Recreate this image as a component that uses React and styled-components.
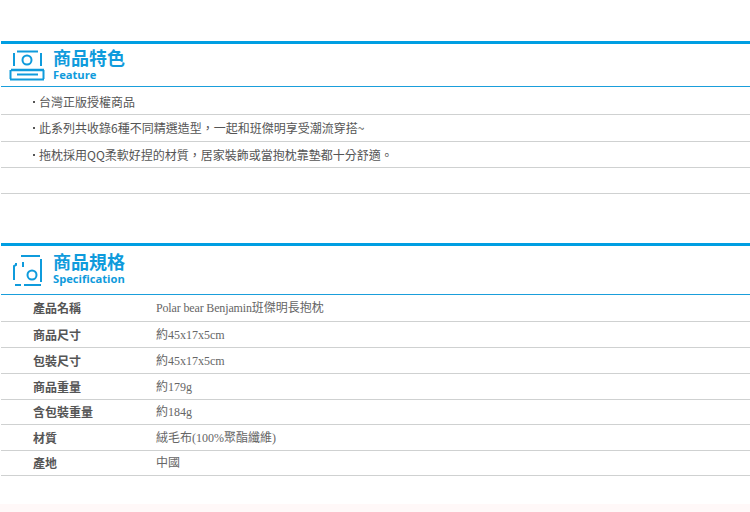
import styled, { createGlobalStyle } from 'styled-components';

const GlobalStyle = createGlobalStyle`
  html, body {
    margin: 0;
    padding: 0;
    background: #fff;
  }
  body {
    font-family: "Liberation Serif", "Noto Sans CJK TC", serif;
  }
`;

const Page = styled.div`
  width: 750px;
  height: 512px;
  overflow: hidden;
  display: flex;
  flex-direction: column;
  padding: 41px 0 0 1px;
  box-sizing: border-box;
`;

const Section = styled.section`
  margin-bottom: ${(p) => p.$gap}px;
`;

const Header = styled.header`
  display: flex;
  align-items: center;
  height: ${(p) => p.$height}px;
  border-top: 3px solid #009ee2;
  border-bottom: 1px solid #1a9edb;
`;

const IconBox = styled.div`
  width: 52px;
  display: flex;
  padding-left: ${(p) => p.$pad}px;
  box-sizing: border-box;
`;

const Titles = styled.div`
  display: flex;
  flex-direction: column;
  gap: 1px;
  padding-bottom: ${(p) => p.$lift}px;
`;

const Title = styled.h2`
  margin: 0;
  font: 700 18px/20px "Noto Sans CJK TC", sans-serif;
  color: #0f9bdc;
`;

const SubTitle = styled.div`
  font: 700 11.2px/14px "Open Sans", "Noto Sans", sans-serif;
  color: #0f9bdc;
`;

const FeatureRow = styled.div`
  height: ${(p) => p.$height}px;
  padding-top: ${(p) => p.$top || 0}px;
  border-bottom: 1px solid #cfd1d1;
  padding-left: 32px;
  display: flex;
  align-items: center;
  font: 400 12px/16px "Noto Sans CJK TC", sans-serif;
  color: #555;
  &[data-bullet]::before {
    content: "";
    width: 2px;
    height: 2px;
    margin-right: 4px;
    background: #555;
  }
`;

const SpecRow = styled.div`
  display: flex;
  align-items: center;
  height: ${(p) => p.$height}px;
  border-bottom: 1px solid #cfd1d1;
`;

const SpecName = styled.div`
  width: 155px;
  padding-left: 32px;
  box-sizing: border-box;
  font: 700 12px/16px "Noto Sans CJK TC", sans-serif;
  color: #555;
`;

const SpecValue = styled.div`
  font: 400 12px/16px "Liberation Serif", "Noto Sans CJK TC", serif;
  color: #666;
`;

const Latin = styled.span`
  letter-spacing: -0.15px;
`;

const BottomTint = styled.div`
  margin-top: auto;
  height: 8px;
  margin-left: -1px;
  background: #fff8f8;
`;

const FeatureIcon = () => (
  <svg width="36" height="31" viewBox="0 0 36 31" fill="none" stroke="#0f9bdc" strokeWidth="2">
    <path d="M8 1.5H29" />
    <path d="M5 3V16M32 3V16" />
    <circle cx="18" cy="10" r="4.5" />
    <path d="M2 20H35" strokeWidth="2.4" />
    <path d="M1.5 20V29M34.5 20V29" />
    <path d="M8 24.5H29" />
    <path d="M1 29.5H35" />
  </svg>
);

const SpecIcon = () => (
  <svg width="32" height="33" viewBox="0 0 32 33" fill="none" stroke="#0f9bdc" strokeWidth="2">
    <path d="M9 2H28" />
    <path d="M29 5V28" />
    <path d="M2 26V12L4 11V9" />
    <path d="M11 8V13" />
    <circle cx="20" cy="21" r="4.5" />
    <path d="M3 31H9M12 31H29" />
  </svg>
);

const features = [
  { text: '台灣正版授權商品', height: 25, top: 2 },
  { text: '此系列共收錄6種不同精選造型，一起和班傑明享受潮流穿搭~', height: 26 },
  { text: '拖枕採用QQ柔軟好捏的材質，居家裝飾或當抱枕靠墊都十分舒適。', height: 25 },
];

const specs = [
  ['產品名稱', <><Latin>Polar bear Benjamin</Latin>班傑明長抱枕</>, 26],
  ['商品尺寸', '約45x17x5cm', 25],
  ['包裝尺寸', '約45x17x5cm', 25],
  ['商品重量', '約179g', 25],
  ['含包裝重量', '約184g', 24],
  ['材質', '絨毛布(100%聚酯纖維)', 25],
  ['產地', '中國', 24],
];

export default function App() {
  return (
    <Page>
      <GlobalStyle />
      <Section $gap={49}>
        <Header $height={42}>
          <IconBox $pad={8}><FeatureIcon /></IconBox>
          <Titles $lift={2}>
            <Title>商品特色</Title>
            <SubTitle>Feature</SubTitle>
          </Titles>
        </Header>
        {features.map((item) => (
          <FeatureRow key={item.text} data-bullet $height={item.height} $top={item.top}>
            {item.text}
          </FeatureRow>
        ))}
        <FeatureRow $height={25} />
      </Section>
      <Section $gap={0}>
        <Header $height={48}>
          <IconBox $pad={11}><SpecIcon /></IconBox>
          <Titles $lift={4}>
            <Title>商品規格</Title>
            <SubTitle>Specification</SubTitle>
          </Titles>
        </Header>
        {specs.map(([name, value, height]) => (
          <SpecRow key={name} $height={height}>
            <SpecName>{name}</SpecName>
            <SpecValue>{value}</SpecValue>
          </SpecRow>
        ))}
      </Section>
      <BottomTint />
    </Page>
  );
}
